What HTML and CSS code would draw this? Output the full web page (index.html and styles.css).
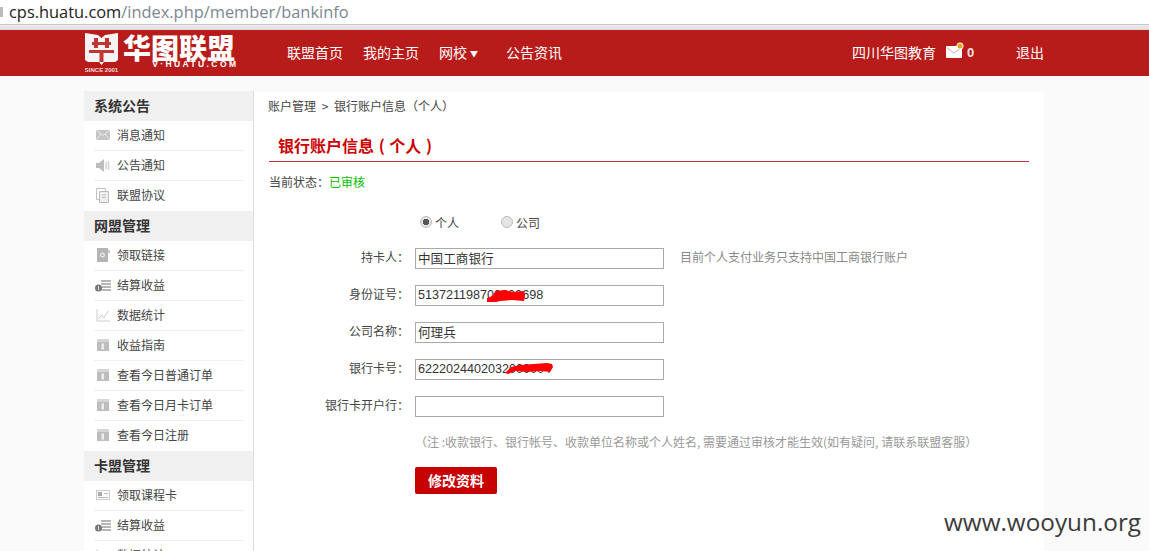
FILE: index.html
```html
<!DOCTYPE html>
<html lang="zh-CN">
<head>
<meta charset="utf-8">
<title>银行账户信息</title>
<link rel="stylesheet" href="styles.css">
</head>
<body>
<svg class="defs" width="0" height="0" aria-hidden="true">
  <symbol id="i-mail" viewBox="0 0 16 16"><rect x="1" y="3" width="14" height="10" fill="#c4c4c4"/><path d="M1 3l7 5.500 7-5.500M1 13l5-6M15 13l-5-6" fill="none" stroke="#eee" stroke-width="1"/></symbol>
  <symbol id="i-sound" viewBox="0 0 16 16"><path d="M1 6h3l5-4v13l-5-4H1z" fill="#bdbdbd"/><path d="M11 5v7M13.500 4v9" stroke="#d4d4d4" stroke-width="1.500"/></symbol>
  <symbol id="i-pages" viewBox="0 0 16 16"><path d="M1.500 1.500h9v3h3v11h-9v-3h-3z" fill="#fff" stroke="#c2c2c2"/><path d="M4.500 4.500h9v11h-9z" fill="#eee" stroke="#bbb"/><path d="M7 8h4M7 10.500h4" stroke="#bbb"/></symbol>
  <symbol id="i-book" viewBox="0 0 16 16"><rect x="2" y="1" width="11" height="14" fill="#b5b5b5"/><rect x="13" y="3" width="2" height="3" fill="#ccc"/><circle cx="7.500" cy="8" r="2.500" fill="#e4e4e4"/><circle cx="7.500" cy="8" r="1" fill="#aaa"/></symbol>
  <symbol id="i-coins" viewBox="0 0 16 16"><path d="M6 4h10M6 7h10M7 10h9M7 13h9" stroke="#b5b5b5" stroke-width="2"/><circle cx="3.500" cy="11" r="3.500" fill="#777"/><path d="M3.500 9v4" stroke="#ddd"/></symbol>
  <symbol id="i-chart" viewBox="0 0 16 16"><path d="M2 2v12h13" fill="none" stroke="#ccc"/><path d="M3.500 12l3-4 2 3 5-7" fill="none" stroke="#c8c8c8"/></symbol>
  <symbol id="i-box" viewBox="0 0 16 16"><rect x="2" y="2" width="12" height="3" fill="#d6d6d6"/><rect x="2" y="5" width="12" height="9" fill="#bdbdbd"/><path d="M6.500 6.500h2.500v6h-2.500z" fill="#eee"/></symbol>
  <symbol id="i-card" viewBox="0 0 16 16"><rect x="1.500" y="3.500" width="13" height="9" fill="#fafafa" stroke="#ccc"/><rect x="3" y="5" width="4" height="4" fill="#aaa"/><path d="M3 10.500h10M9 6.500h4" stroke="#bbb"/></symbol>
</svg>

<div class="addr">
  <span class="addr-lock"></span>
  <span class="addr-host">cps.huatu.com</span><span class="addr-path">/index.php/member/bankinfo</span>
</div>
<div class="chrome-edge"></div>

<header class="top">
  <a class="logo">
    <span class="logo-mark">
      <svg width="33" height="32" viewBox="0 0 33 32" aria-hidden="true">
        <path d="M0 0l13 2 3.500 3L20 2l13-2v27l-3 2H19l-2.500 3-2.500-3H3l-3-2z" fill="#f7f3f3"/>
        <path d="M9 5h4v4h7V5h4v4h2v3h-2v3h-4v-3h-7v3H9v-3H7V9h2zM4 17h25v3H18.500v9h-4v-9H4z" fill="#b71c1a" opacity=".88"/>
      </svg>
      <span class="logo-since">SINCE 2001</span>
    </span>
    <span class="logo-words">
      <span class="logo-cn">华图联盟</span>
      <span class="logo-en">V·HUATU.COM</span>
    </span>
  </a>
  <nav class="nav">
    <a>联盟首页</a>
    <a>我的主页</a>
    <a>网校<span class="caret">▼</span></a>
    <a class="nav-news">公告资讯</a>
  </nav>
  <div class="user">
    <span class="user-name">四川华图教育</span>
    <span class="mail">
      <svg width="18" height="18" viewBox="0 0 18 18" aria-hidden="true">
        <rect x="0" y="4" width="16" height="12" rx="1" fill="#fff"/>
        <path d="M1 6l7 5 7-5" fill="none" stroke="#e2a9a9"/>
        <circle cx="14" cy="4" r="3.500" fill="#fff"/>
        <circle cx="14" cy="4" r="2.500" fill="#f5a31a"/>
      </svg>
      <b class="mail-count">0</b>
    </span>
    <a class="logout">退出</a>
  </div>
</header>

<div class="layout">
  <aside class="side">
    <h3 class="side-head">系统公告</h3>
    <ul class="side-list">
      <li><svg class="ic"><use href="#i-mail"/></svg>消息通知</li>
      <li><svg class="ic"><use href="#i-sound"/></svg>公告通知</li>
      <li><svg class="ic"><use href="#i-pages"/></svg>联盟协议</li>
    </ul>
    <h3 class="side-head">网盟管理</h3>
    <ul class="side-list">
      <li><svg class="ic"><use href="#i-book"/></svg>领取链接</li>
      <li><svg class="ic"><use href="#i-coins"/></svg>结算收益</li>
      <li><svg class="ic"><use href="#i-chart"/></svg>数据统计</li>
      <li><svg class="ic"><use href="#i-box"/></svg>收益指南</li>
      <li><svg class="ic"><use href="#i-box"/></svg>查看今日普通订单</li>
      <li><svg class="ic"><use href="#i-box"/></svg>查看今日月卡订单</li>
      <li><svg class="ic"><use href="#i-box"/></svg>查看今日注册</li>
    </ul>
    <h3 class="side-head">卡盟管理</h3>
    <ul class="side-list">
      <li><svg class="ic"><use href="#i-card"/></svg>领取课程卡</li>
      <li><svg class="ic"><use href="#i-coins"/></svg>结算收益</li>
      <li><svg class="ic"><use href="#i-chart"/></svg>数据统计</li>
    </ul>
  </aside>

  <main class="main">
    <div class="crumb">账户管理 <span class="crumb-sep">&gt;</span> 银行账户信息（个人）</div>
    <h2 class="title">银行账户信息 ( 个人 )</h2>
    <div class="status">当前状态：<span class="status-ok">已审核</span></div>

    <form class="form">
      <div class="radios">
        <label class="radio"><input type="radio" name="t" checked>个人</label>
        <label class="radio"><input type="radio" name="t">公司</label>
      </div>
      <div class="row">
        <label class="row-label">持卡人：</label>
        <input class="field" value="中国工商银行">
        <span class="hint">目前个人支付业务只支持中国工商银行账户</span>
      </div>
      <div class="row">
        <label class="row-label">身份证号：</label>
        <span class="field-wrap">
          <input class="field" value="513721198700000698">
          <svg class="scribble scribble-id" width="38" height="13" viewBox="0 0 38 13" aria-hidden="true"><path d="M0 13V9l5-2 4-5 9-1 8 2 11-1 1 5-1 5-12-1-12 1-4 1z" fill="#f00"/></svg>
        </span>
      </div>
      <div class="row">
        <label class="row-label">公司名称：</label>
        <input class="field" value="何理兵">
      </div>
      <div class="row">
        <label class="row-label">银行卡号：</label>
        <span class="field-wrap">
          <input class="field" value="6222024402032000004">
          <svg class="scribble scribble-card" width="48" height="12" viewBox="0 0 48 12" aria-hidden="true"><path d="M0 11l6-6 9-2 14-1 13-1 5 1 1 3-3 5-9-1-14 1-12-1-7 3z" fill="#f00"/></svg>
        </span>
      </div>
      <div class="row">
        <label class="row-label">银行卡开户行：</label>
        <input class="field">
      </div>
      <p class="note">（注 :收款银行、银行帐号、收款单位名称或个人姓名, 需要通过审核才能生效(如有疑问, 请联系联盟客服）</p>
      <button class="submit" type="button">修改资料</button>
    </form>
  </main>
</div>
<div class="mark">www.wooyun.org</div>
</body>
</html>
```
FILE: styles.css
```css
* { box-sizing: border-box; }
html, body { margin: 0; padding: 0; }
body {
  width: 1149px;
  height: 551px;
  overflow: hidden;
  position: relative;
  background: #fafafa;
  color: #333;
  font-family: "Liberation Sans", "Noto Sans CJK SC", sans-serif;
  font-size: 12px;
}
.defs { position: absolute; }
ul, h2, h3, p { margin: 0; padding: 0; }
ul { list-style: none; }

.addr {
  height: 25px;
  background: #fff;
  border-bottom: 1px solid #c8c8c8;
  padding-left: 9px;
  font-family: "Open Sans", sans-serif;
  font-size: 16.400px;
  line-height: 24px;
  white-space: nowrap;
  position: relative;
}
.addr-lock { position: absolute; left: 0; top: 7px; width: 3px; height: 10px; background: #bbb; }
.addr-host { color: #222; }
.addr-path { color: #7d8791; }
.chrome-edge { height: 5px; background: linear-gradient(#ececec, #dcdcdc); }

.top {
  height: 46px;
  background: #b71c1a;
  padding-left: 85px;
  display: flex;
  align-items: stretch;
  color: #fff;
}
.logo { width: 202px; display: flex; gap: 5px; padding-top: 3px; }
.logo-mark { display: flex; flex-direction: column; align-items: center; width: 33px; }
.logo-mark svg { flex: none; }
.logo-since { font-size: 6px; line-height: 9px; font-weight: bold; white-space: nowrap; color: #f3dcdc; margin-top: 1px; }
.logo-words { display: flex; flex-direction: column; align-items: flex-end; width: 114px; }
.logo-cn {
  align-self: flex-start;
  font-family: "Noto Sans CJK SC", sans-serif;
  font-weight: 900;
  font-size: 28px;
  line-height: 28px;
  white-space: nowrap;
}
.logo-en { font-size: 8.500px; line-height: 6px; font-weight: bold; letter-spacing: 2.400px; margin-right: -1.400px; white-space: nowrap; }

.nav { display: flex; gap: 20px; align-items: center; font-size: 14px; font-family: "Noto Sans CJK SC", sans-serif; padding-bottom: 2px; }
.caret { font-size: 8px; margin-left: 3px; vertical-align: 1px; }
.nav-news { margin-left: 8px; }

.user { margin-left: auto; padding: 0 105px 2px 0; display: flex; align-items: center; font-size: 14px; font-family: "Noto Sans CJK SC", sans-serif; }
.mail { display: flex; align-items: center; margin-left: 10px; width: 70px; }
.mail svg { margin-top: -2px; }
.mail-count { font-family: "Liberation Sans", sans-serif; font-size: 13px; margin-left: 3px; color: #f6e3e3; }

.layout { display: flex; padding: 15px 0 0 84px; }
.side {
  width: 170px;
  height: 500px;
  background: #fff;
  border-right: 1px solid #ddd;
  flex: none;
}
.side-head {
  height: 30px;
  line-height: 28px;
  padding-left: 10px;
  background: #f0f0f0;
  font-size: 14px;
  font-weight: bold;
  font-family: "Noto Sans CJK SC", sans-serif;
  color: #333;
}
.side-list { padding-left: 10px; width: 160px; }
.side-list li {
  height: 30px;
  padding-bottom: 2px;
  border-bottom: 1px solid #f0f0f0;
  display: flex;
  align-items: center;
  font-family: "Noto Sans CJK SC", sans-serif;
  color: #444;
}
.side-list li:last-child { border-bottom-color: transparent; }
.ic { width: 16px; height: 16px; margin: 0 6px 0 1px; flex: none; }

.main {
  width: 790px;
  height: 460px;
  margin-top: 1px;
  background: #fff;
  padding: 0 15px;
  font-family: "Noto Sans CJK SC", sans-serif;
}
.crumb { height: 28px; line-height: 28px; margin-left: -1px; color: #444; white-space: nowrap; }
.crumb-sep { margin: 0 3px; }
.title {
  height: 42px;
  line-height: 50px;
  padding-left: 9px;
  border-bottom: 1px solid #b33;
  font-size: 16px;
  font-weight: bold;
  color: #c00;
  word-spacing: 1px;
}
.status { height: 20px; line-height: 20px; margin-top: 10px; color: #444; }
.status-ok { color: #00c000; }

.form { padding-left: 146px; }
.radios { display: flex; height: 20px; margin-top: 20px; margin-bottom: 15px; padding-left: 5px; }
.radio { display: flex; align-items: center; width: 81px; color: #444; }
.radio input {
  appearance: none;
  width: 12px;
  height: 12px;
  margin: 0 3px 0 0;
  border-radius: 50%;
  border: 1px solid #bbb;
  background: #e4e4e4;
}
.radio input:checked { background: radial-gradient(circle, #555 0 3px, #e4e4e4 3.500px); }
.row { display: flex; align-items: center; height: 22px; margin-bottom: 15px; }
.row-label { width: 120px; margin-left: -126px; margin-right: 6px; padding-bottom: 4px; text-align: right; white-space: nowrap; color: #444; }
.field-wrap { position: relative; display: block; }
.field {
  display: block;
  width: 249px;
  height: 21px;
  border: 1px solid #aaa;
  padding: 0 2px 1px;
  font-family: "Liberation Sans", "Noto Sans CJK SC", sans-serif;
  font-size: 12.600px;
  color: #333;
  background: #fff;
  outline: none;
}
.hint { margin-left: 16px; padding-bottom: 3px; color: #888; white-space: nowrap; }
.scribble { position: absolute; }
.scribble-id { left: 72px; top: 4px; }
.scribble-card { left: 90px; top: 3px; }
.note { height: 24px; line-height: 24px; margin-top: -2px; color: #999; white-space: nowrap; }
.submit {
  display: block;
  width: 82px;
  height: 27px;
  margin-top: 13px;
  border: 0;
  border-radius: 2px;
  background: #c70000;
  color: #fff;
  font-family: "Noto Sans CJK SC", sans-serif;
  font-size: 14px;
  font-weight: bold;
  padding: 0 0 1px;
}
.mark {
  position: absolute;
  left: 944px;
  top: 505px;
  font-family: "Open Sans", sans-serif;
  font-size: 24.300px;
  line-height: 34px;
  color: #3c3c3c;
  white-space: nowrap;
}
```
